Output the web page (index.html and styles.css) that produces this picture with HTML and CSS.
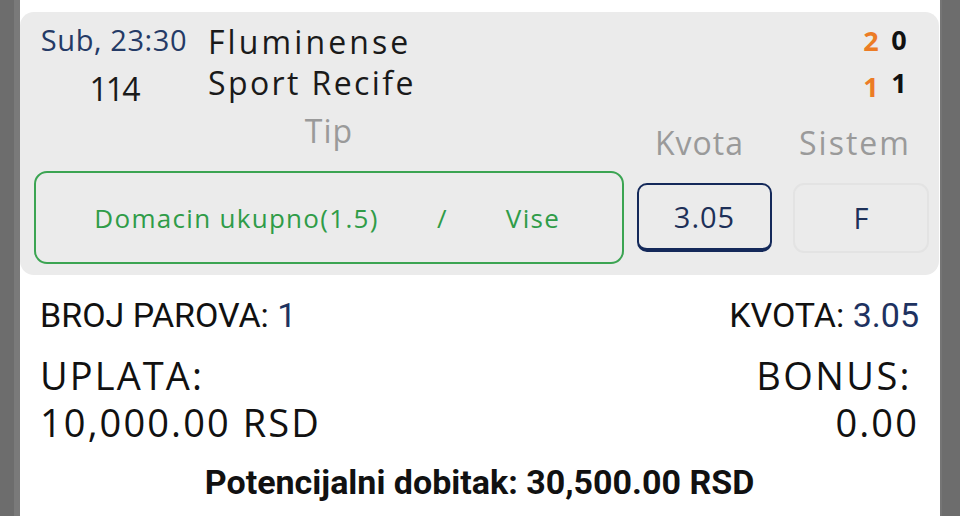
FILE: index.html
```html
<!DOCTYPE html>
<html lang="sr">
<head>
<meta charset="utf-8">
<title>Tiket</title>
<link rel="stylesheet" href="styles.css">
</head>
<body>
<div class="app">
  <div class="side side-left"></div>
  <main class="main">
    <section class="card">
      <div class="match">
        <div class="when">
          <div class="time">Sub, 23:30</div>
          <div class="code">114</div>
        </div>
        <div class="teams">
          <div class="team team-home">Fluminense</div>
          <div class="team">Sport Recife</div>
        </div>
        <div class="score">
          <div class="score-col ht"><span>2</span><span>1</span></div>
          <div class="score-col ft"><span>0</span><span>1</span></div>
        </div>
      </div>
      <div class="bet">
        <div class="col col-tip">
          <div class="label">Tip</div>
          <div class="box tip-box">
            <span class="tip-name">Domacin ukupno(1.5)</span>
            <span class="tip-sep">/</span>
            <span class="tip-val">Vise</span>
          </div>
        </div>
        <div class="col col-odd">
          <div class="label label-shift">Kvota</div>
          <div class="box odd-box">3.05</div>
        </div>
        <div class="col col-sys">
          <div class="label label-shift label-wide">Sistem</div>
          <div class="box sys-box">F</div>
        </div>
      </div>
    </section>
    <section class="summary">
      <div class="row row-top">
        <span>BROJ PAROVA: <span class="val">1</span></span>
        <span>KVOTA: <span class="val">3.05</span></span>
      </div>
      <div class="row row-money">
        <div>UPLATA:<br>10,000.00 RSD</div>
        <div class="right"><span class="bonus">BONUS:</span><br>0.00</div>
      </div>
      <div class="win">Potencijalni dobitak: 30,500.00 RSD</div>
    </section>
  </main>
  <div class="side side-right"></div>
</div>
</body>
</html>
```
FILE: styles.css
```css
* { box-sizing: border-box; }
html, body { margin: 0; padding: 0; }
body {
  background: #ffffff;
  font-family: "Open Sans", "Noto Sans", sans-serif;
  color: #161616;
}
.app {
  display: flex;
  width: 960px;
  height: 516px;
  overflow: hidden;
}
.side { width: 20px; flex: none; background: #6d6d6d; }
.side-left { border-right: 6px solid #7a7a7a; }
.side-right { border-left: 2px solid #757575; }
.main { flex: 1; min-width: 0; background: #fff; padding-top: 12px; }

.card {
  margin-right: 1px;
  height: 263px;
  background: #ebebeb;
  border-radius: 14px;
  padding-top: 10px;
}
.match {
  display: flex;
  height: 91px;
}
.when { width: 188px; flex: none; text-align: center; }
.time {
  font-size: 29px;
  line-height: 36px;
  color: #243a66;
  letter-spacing: 0.6px;
}
.code {
  font-size: 32px;
  line-height: 61px;
  color: #1a1a1a;
  letter-spacing: -2px;
}
.teams { flex: 1; }
.team {
  font-size: 32px;
  line-height: 42px;
  color: #1a1a1a;
  letter-spacing: 2.4px;
  margin-top: -1px;
}
.team-home { letter-spacing: 3.1px; }
.score {
  display: flex;
  gap: 8px;
  margin-top: -4px;
  padding-right: 30px;
  font-weight: 700;
  font-size: 27px;
}
.score-col { display: flex; flex-direction: column; width: 20px; text-align: center; }
.ht { color: #ec7c25; line-height: 46px; }
.ft { color: #111; line-height: 43px; }

.bet {
  display: flex;
  align-items: center;
  padding-left: 14px;
}
.col { display: flex; flex-direction: column; }
.label {
  font-size: 32px;
  line-height: 36px;
  color: #9a9a9a;
  text-align: center;
  margin-bottom: 22px;
  letter-spacing: 1px;
}
.label-shift { padding-right: 10px; }
.label-wide { letter-spacing: 2px; padding-right: 12px; }
.box {
  display: flex;
  align-items: center;
  justify-content: center;
}
.col-tip { width: 590px; }
.tip-box {
  height: 93px;
  border: 2px solid #3ba452;
  border-radius: 13px;
  color: #2f9c48;
  font-size: 26px;
  letter-spacing: 1.3px;
  justify-content: flex-start;
}
.tip-name { width: 401px; text-align: center; }
.tip-sep { width: 10px; text-align: center; }
.tip-val { width: 172px; text-align: center; }
.col-odd { width: 135px; margin-left: 13px; }
.odd-box {
  height: 69px;
  border: 2px solid #14295a;
  border-bottom-width: 4px;
  border-radius: 10px;
  color: #1d3058;
  font-size: 29px;
  letter-spacing: 1px;
}
.col-sys { width: 136px; margin-left: 21px; }
.sys-box {
  height: 70px;
  border: 2px solid #e3e3e3;
  border-radius: 11px;
  color: #1d3058;
  font-size: 29px;
}

.summary { padding: 20px 21px 0 20px; }
.row { display: flex; justify-content: space-between; }
.row-top {
  font-family: Roboto, "Liberation Sans", sans-serif;
  font-size: 34px;
  line-height: 40px;
  color: #111;
}
.val { color: #1e3260; }
.row-money {
  margin-top: 17px;
  font-size: 38px;
  line-height: 47px;
  color: #111;
  letter-spacing: 2.1px;
}
.right { text-align: right; }
.bonus { padding-right: 7px; letter-spacing: 2.4px; }
.win {
  margin-top: 16px;
  text-align: center;
  font-family: Roboto, "Liberation Sans", sans-serif;
  font-weight: 700;
  font-size: 34px;
  line-height: 40px;
  color: #111;
}
```
